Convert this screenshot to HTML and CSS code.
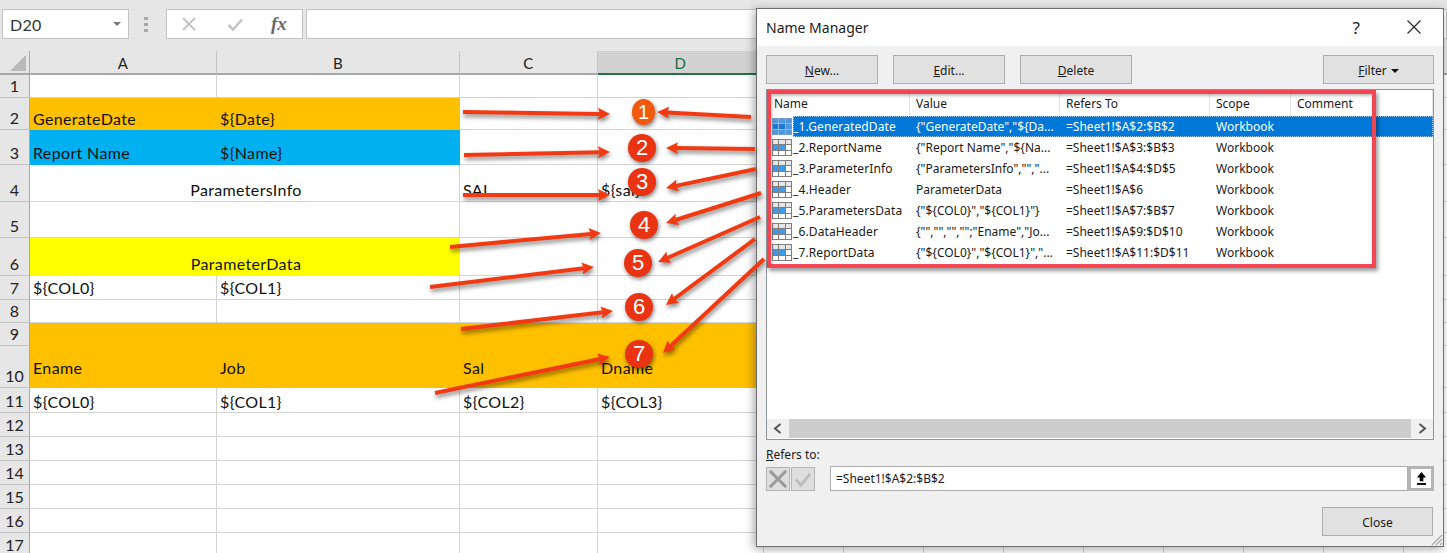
FILE: index.html
```html
<!DOCTYPE html>
<html lang="en">
<head>
<meta charset="utf-8">
<title>Name Manager</title>
<link rel="stylesheet" href="styles.css">
</head>
<body>
<svg class="defs" width="0" height="0" aria-hidden="true">
  <defs>
    <symbol id="tbl" viewBox="0 0 20 17">
      <rect x="0.5" y="0.5" width="19" height="16" fill="#fff" stroke="#7f7f7f"/>
      <rect x="1" y="1" width="18" height="4" fill="#e6e6e6"/>
      <rect x="1" y="6" width="12" height="5" fill="#3f9be8"/>
      <path d="M0 5.500H20M0 11.500H20M6.500 0V17M13.500 0V17" stroke="#7f7f7f" stroke-width="1" fill="none"/>
    </symbol>
    <symbol id="tbl-sel" viewBox="0 0 20 17">
      <rect x="0.5" y="0.5" width="19" height="16" fill="#4f97dc" stroke="#6f9fcc"/>
      <rect x="1" y="6" width="12" height="5" fill="#1f78d0"/>
      <path d="M0 5.500H20M0 11.500H20M6.500 0V17M13.500 0V17" stroke="#86b6e6" stroke-width="1" fill="none"/>
    </symbol>
    <marker id="head" markerUnits="userSpaceOnUse" markerWidth="14" markerHeight="14" refX="2" refY="7" orient="auto">
      <path d="M0 1 L12 7 L0 13 L2 7 Z" fill="#f23a12"/>
    </marker>
  </defs>
</svg>

<header class="toolbar">
  <div class="namebox"><span>D20</span><i class="caret"></i></div>
  <div class="dots"><i></i><i></i><i></i></div>
  <div class="fxbox">
    <svg class="fxicon" viewBox="0 0 16 16"><path d="M2 2L14 14M14 2L2 14" stroke="#c6c6c6" stroke-width="2.2" fill="none"/></svg>
    <svg class="fxicon" viewBox="0 0 16 16"><path d="M1.500 9L6 13.500L15 3.500" stroke="#c6c6c6" stroke-width="2.600" fill="none"/></svg>
    <span class="fx">fx</span>
  </div>
  <div class="formula"></div>
</header>

<main class="sheet">
  <div class="corner"><i></i></div><div class="ch">A</div><div class="ch">B</div><div class="ch">C</div><div class="ch active">D</div><div class="ch rest"></div>

  <div class="rh">1</div><div class="c"></div><div class="c"></div><div class="c"></div><div class="c"></div><div class="c rest"></div>
  <div class="rh">2</div><div class="c orange flush">GenerateDate</div><div class="c orange flush">${Date}</div><div class="c"></div><div class="c"></div><div class="c rest"></div>
  <div class="rh">3</div><div class="c blue">Report Name</div><div class="c blue">${Name}</div><div class="c"></div><div class="c"></div><div class="c rest"></div>
  <div class="rh">4</div><div class="c span2 center">ParametersInfo</div><div class="c">SAL</div><div class="c">${sal}</div><div class="c rest"></div>
  <div class="rh">5</div><div class="c span2"></div><div class="c"></div><div class="c"></div><div class="c rest"></div>
  <div class="rh">6</div><div class="c span2 center yellow">ParameterData</div><div class="c"></div><div class="c"></div><div class="c rest"></div>
  <div class="rh">7</div><div class="c">${COL0}</div><div class="c">${COL1}</div><div class="c"></div><div class="c"></div><div class="c rest"></div>
  <div class="rh">8</div><div class="c"></div><div class="c"></div><div class="c"></div><div class="c"></div><div class="c rest"></div>
  <div class="rh">9</div><div class="c orange span4"></div><div class="c rest"></div>
  <div class="rh">10</div><div class="c orange mid">Ename</div><div class="c orange mid">Job</div><div class="c orange mid">Sal</div><div class="c orange mid">Dname</div><div class="c rest"></div>
  <div class="rh">11</div><div class="c flush">${COL0}</div><div class="c flush">${COL1}</div><div class="c flush">${COL2}</div><div class="c flush">${COL3}</div><div class="c rest"></div>
  <div class="rh">12</div><div class="c"></div><div class="c"></div><div class="c"></div><div class="c"></div><div class="c rest"></div>
  <div class="rh">13</div><div class="c"></div><div class="c"></div><div class="c"></div><div class="c"></div><div class="c rest"></div>
  <div class="rh">14</div><div class="c"></div><div class="c"></div><div class="c"></div><div class="c"></div><div class="c rest"></div>
  <div class="rh">15</div><div class="c"></div><div class="c"></div><div class="c"></div><div class="c"></div><div class="c rest"></div>
  <div class="rh">16</div><div class="c"></div><div class="c"></div><div class="c"></div><div class="c"></div><div class="c rest"></div>
  <div class="rh">17</div><div class="c"></div><div class="c"></div><div class="c"></div><div class="c"></div><div class="c rest"></div>
</main>

<section class="dialog">
  <div class="titlebar">
    <span class="title">Name Manager</span>
    <span class="help">?</span>
    <svg class="close-x" viewBox="0 0 14 14"><path d="M0.500 0.500L13.500 13.500M13.500 0.500L0.500 13.500" stroke="#222" stroke-width="1.100" fill="none"/></svg>
  </div>
  <div class="dbody">
    <div class="btnrow">
      <button class="btn"><u>N</u>ew...</button>
      <button class="btn"><u>E</u>dit...</button>
      <button class="btn"><u>D</u>elete</button>
      <button class="btn filter"><span><u>F</u>ilter</span><i class="caret dark"></i></button>
    </div>
    <div class="list">
      <div class="lhead">
        <span>Name</span><span>Value</span><span>Refers To</span><span>Scope</span><span>Comment</span>
      </div>
      <div class="lrow selected"><svg class="ticon"><use href="#tbl-sel"/></svg><div class="cells"><span>_1.GeneratedDate</span><span>{"GenerateDate","${Da...</span><span>=Sheet1!$A$2:$B$2</span><span>Workbook</span></div></div>
      <div class="lrow"><svg class="ticon"><use href="#tbl"/></svg><div class="cells"><span>_2.ReportName</span><span>{"Report Name","${Na...</span><span>=Sheet1!$A$3:$B$3</span><span>Workbook</span></div></div>
      <div class="lrow"><svg class="ticon"><use href="#tbl"/></svg><div class="cells"><span>_3.ParameterInfo</span><span>{"ParametersInfo","","...</span><span>=Sheet1!$A$4:$D$5</span><span>Workbook</span></div></div>
      <div class="lrow"><svg class="ticon"><use href="#tbl"/></svg><div class="cells"><span>_4.Header</span><span>ParameterData</span><span>=Sheet1!$A$6</span><span>Workbook</span></div></div>
      <div class="lrow"><svg class="ticon"><use href="#tbl"/></svg><div class="cells"><span>_5.ParametersData</span><span>{"${COL0}","${COL1}"}</span><span>=Sheet1!$A$7:$B$7</span><span>Workbook</span></div></div>
      <div class="lrow"><svg class="ticon"><use href="#tbl"/></svg><div class="cells"><span>_6.DataHeader</span><span>{"","","","";"Ename","Jo...</span><span>=Sheet1!$A$9:$D$10</span><span>Workbook</span></div></div>
      <div class="lrow"><svg class="ticon"><use href="#tbl"/></svg><div class="cells"><span>_7.ReportData</span><span>{"${COL0}","${COL1}","...</span><span>=Sheet1!$A$11:$D$11</span><span>Workbook</span></div></div>
      <div class="lspace"></div>
      <div class="hscroll">
        <svg class="sarrow" viewBox="0 0 22 19"><path d="M13.500 5L8 9.500L13.500 14" stroke="#555" stroke-width="2" fill="none"/></svg>
        <div class="strack"></div>
        <svg class="sarrow" viewBox="0 0 22 19"><path d="M8.500 5L14 9.500L8.500 14" stroke="#555" stroke-width="2" fill="none"/></svg>
      </div>
    </div>
    <div class="reflabel"><u>R</u>efers to:</div>
    <div class="refrow">
      <div class="mini"><svg viewBox="0 0 23 23"><path d="M3 3L20 20M20 3L3 20" stroke="#9a9a9a" stroke-width="3" fill="none"/></svg></div>
      <div class="mini"><svg viewBox="0 0 23 23"><path d="M4 12L9.500 18L19 6" stroke="#bdbdbd" stroke-width="3" fill="none"/></svg></div>
      <div class="refinput">=Sheet1!$A$2:$B$2</div>
      <div class="refbtn"><svg viewBox="0 0 12 14"><path d="M6 0L11 6H8V10H4V6H1Z" fill="#000"/><rect x="1" y="12" width="10" height="2" fill="#000"/></svg></div>
    </div>
    <div class="footer"><button class="btn closebtn">Close</button></div>
  </div>
  <svg class="grip" viewBox="0 0 12 12"><path d="M11 1L1 11M11 5L5 11M11 9L9 11" stroke="#a8a8a8" stroke-width="1.200" fill="none"/></svg>
  <div class="redbox"></div>
</section>

<svg class="arrows" viewBox="0 0 1447 553" aria-hidden="true">
  <g class="arrowset">
    <line x1="463" y1="112" x2="600" y2="113.900" marker-end="url(#head)"/>
    <line x1="464" y1="155" x2="600" y2="152.200" marker-end="url(#head)"/>
    <line x1="463" y1="195" x2="600" y2="195" marker-end="url(#head)"/>
    <line x1="450" y1="247" x2="591" y2="233.900" marker-end="url(#head)"/>
    <line x1="430" y1="287" x2="584" y2="268.200" marker-end="url(#head)"/>
    <line x1="461" y1="329" x2="603" y2="312.200" marker-end="url(#head)"/>
    <line x1="435" y1="393" x2="600.200" y2="359" marker-end="url(#head)"/>
    <line x1="751" y1="117" x2="667" y2="112.500" marker-end="url(#head)"/>
    <line x1="755" y1="149" x2="676" y2="148.100" marker-end="url(#head)"/>
    <line x1="756" y1="169" x2="675.800" y2="185.900" marker-end="url(#head)"/>
    <line x1="761" y1="193" x2="675.500" y2="220" marker-end="url(#head)"/>
    <line x1="760" y1="217" x2="667.200" y2="258" marker-end="url(#head)"/>
    <line x1="755" y1="239" x2="674" y2="299" marker-end="url(#head)"/>
    <line x1="764" y1="259" x2="670.300" y2="346.200" marker-end="url(#head)"/>
  </g>
</svg>

<div class="badge b1">1</div>
<div class="badge b2">2</div>
<div class="badge b3">3</div>
<div class="badge b4">4</div>
<div class="badge b5">5</div>
<div class="badge b6">6</div>
<div class="badge b7">7</div>
</body>
</html>
```

FILE: styles.css
```css
* { box-sizing: border-box; }
html, body { margin: 0; height: 553px; overflow: hidden; }
body { position: relative; background: #fff; font-family: "Lato", "Liberation Sans", sans-serif; color: #111; }
.defs { position: absolute; }
i { display: block; }

.toolbar { height: 51px; background: #e6e6e6; display: flex; align-items: flex-start; padding: 9px 0 0 2px; }
.namebox { width: 127px; height: 30px; background: #fff; border: 1px solid #c4c4c4; display: flex; align-items: center; justify-content: space-between; padding: 0 7px 0 7px; font-size: 16px; letter-spacing: .3px; color: #333; }
.caret { width: 0; height: 0; border-left: 4px solid transparent; border-right: 4px solid transparent; border-top: 4px solid #777; }
.caret.dark { border-top-color: #111; margin-left: 4px; }
.dots { width: 6px; margin: 8px 16px 0 15px; display: flex; flex-direction: column; gap: 3px; }
.dots i { width: 4px; height: 3px; background: #a8a8a8; }
.fxbox { width: 137px; height: 30px; background: #fff; border: 1px solid #c4c4c4; display: flex; align-items: center; padding-left: 14px; gap: 30px; }
.fxicon { width: 16px; height: 16px; flex: none; }
.fx { font: italic bold 19px "Liberation Serif", serif; color: #6a6a6a; margin-left: -2px; }
.formula { flex: 1; height: 30px; margin-left: 3px; background: #fff; border: 1px solid #c4c4c4; }

.sheet { display: grid; grid-template-columns: 30px 187px 243px 138px 166px 1fr; grid-template-rows: 24px 23px 32px 35px 37px 36px 38px 24px 23px 23px 42px 25px 24px 24px 24px 24px 24px 24px; font-size: 16px; letter-spacing: .35px; }
.corner { background: #e6e6e6; border-right: 1px solid #a8a8a8; border-bottom: 2px solid #a8a8a8; position: relative; }
.corner i { width: 0; height: 0; margin: 4px 0 0 10px; border-left: 16px solid transparent; border-bottom: 16px solid #b9b9b9; }
.ch { background: #e6e6e6; border-right: 1px solid #c4c4c4; border-bottom: 2px solid #a8a8a8; display: flex; align-items: center; justify-content: center; color: #222; font-size: 15px; padding-top: 1px; }
.ch.active { background: #d2d2d2; border-bottom: 2px solid #217346; color: #1c6b42; }
.rh { background: #e6e6e6; border-right: 1px solid #a8a8a8; border-bottom: 1px solid #c4c4c4; display: flex; align-items: flex-end; justify-content: center; color: #222; line-height: 22px; font-size: 16px; letter-spacing: 0; }
.c { border-right: 1px solid #d4d4d4; border-bottom: 1px solid #d4d4d4; padding: 0 0 1px 3px; display: flex; align-items: flex-end; line-height: 20px; white-space: nowrap; }
.c.flush { padding-bottom: 0; }
.rest { border-right: 0; background-image: repeating-linear-gradient(90deg, transparent 0, transparent 79px, #d4d4d4 79px, #d4d4d4 80px); }
.span2 { grid-column: span 2; }
.span4 { grid-column: span 4; }
.center { justify-content: center; }
.orange { background: #ffc000; border-color: #ffc000; }
.blue { background: #00b0f0; border-color: #00b0f0; }
.yellow { background: #ffff00; border-color: #ffff00; }
.c.mid { align-items: center; padding: 3px 0 0 3px; }

.dialog { position: absolute; left: 756px; top: 8px; width: 688px; height: 539px; background: #f0f0f0; border: 1px solid #6e6e6e; box-shadow: -2px 2px 9px rgba(0,0,0,.35); display: flex; flex-direction: column; font-family: "Noto Sans", "Open Sans", sans-serif; font-size: 12px; color: #1a1a1a; }
.titlebar { height: 37px; background: #fff; display: flex; align-items: center; padding: 0 22px 1px 9px; flex: none; }
.title { font-size: 14px; flex: 1; }
.help { font-size: 17px; margin-right: 47px; }
.close-x { width: 14px; height: 14px; }
.dbody { flex: 1; display: flex; flex-direction: column; padding: 9px 9px 0 9px; }
.btnrow { display: flex; gap: 15px; }
.btn { width: 112px; height: 29px; background: #e1e1e1; border: 1px solid #adadad; font: inherit; color: inherit; padding: 2px 0 0; display: flex; align-items: center; justify-content: center; }
.filter { margin-left: auto; width: 111px; }
.list { margin-top: 5px; height: 351px; width: 668px; background: #fff; border: 1px solid #8f949b; display: flex; flex-direction: column; }
.lhead { height: 26px; flex: none; display: grid; grid-template-columns: 143px 150px 150px 81px 1fr; align-items: center; }
.lhead span { padding: 2px 0 0 6px; border-right: 1px solid #e5e5e5; line-height: 24px; }
.lhead span:first-child { padding-left: 7px; }
.lrow { height: 21px; display: flex; flex: none; align-items: center; padding-left: 5px; }
.ticon { width: 20px; height: 17px; flex: none; }
.cells { margin-left: 1px; flex: 1; height: 21px; display: grid; grid-template-columns: 117px 150px 150px 1fr; align-items: center; white-space: nowrap; letter-spacing: .12px; }
.cells span + span { padding-left: 6px; letter-spacing: 0; }
.selected .cells { background: #0078d7; color: #fff; outline: 1px dotted #9cc8ee; outline-offset: -1px; }
.lspace { flex: 1; }
.hscroll { height: 20px; display: flex; flex: none; }
.sarrow { width: 22px; height: 19px; flex: none; background: #f0f0f0; }
.strack { flex: 1; height: 19px; background: #cdcdcd; }
.reflabel { margin-top: 7px; height: 19px; line-height: 16px; }
.refrow { display: flex; height: 25px; align-items: center; }
.mini { width: 24px; height: 24px; background: #dedede; border: 1px solid #b4b4b4; margin-right: 1px; flex: none; }
.mini svg { display: block; width: 22px; height: 22px; }
.refinput { margin-left: 14px; width: 578px; height: 25px; background: #fff; border: 1px solid #adadad; line-height: 24px; padding-left: 5px; }
.refbtn { width: 26px; height: 25px; background: #fff; border: 3px solid #b4b4b4; display: flex; align-items: center; justify-content: center; }
.refbtn svg { width: 11px; height: 13px; }
.footer { margin-top: 16px; display: flex; justify-content: flex-end; padding-right: 1px; }
.closebtn { width: 111px; }
.grip { position: absolute; right: 0; bottom: 0; width: 12px; height: 12px; }
.redbox { position: absolute; left: 10px; top: 81px; width: 609px; height: 178px; border: 4px solid #f24652; box-shadow: 2px 3px 4px rgba(0,0,0,.4), inset 1px 2px 3px rgba(0,0,0,.25); }

.arrows { position: absolute; left: 0; top: 0; width: 1447px; height: 553px; pointer-events: none; }
.arrowset { filter: drop-shadow(1px 3px 2px rgba(0,0,0,.45)); }
.arrowset line { stroke: #f23a12; stroke-width: 4; }

.badge { position: absolute; width: 28px; height: 28px; border-radius: 50%; background: #ea3312; color: #fff; font: 22px/28px "Liberation Sans", sans-serif; text-align: center; box-shadow: 1px 2px 4px rgba(0,0,0,.5); }
.b1 { left: 632px; top: 99px; width: 23px; height: 26px; background: #f15a0c; font-size: 20px; line-height: 26px; }
.b2 { left: 628px; top: 134px; }
.b3 { left: 628px; top: 168px; }
.b4 { left: 630px; top: 211px; }
.b5 { left: 624px; top: 249px; }
.b6 { left: 625px; top: 293px; }
.b7 { left: 625px; top: 340px; }
```
